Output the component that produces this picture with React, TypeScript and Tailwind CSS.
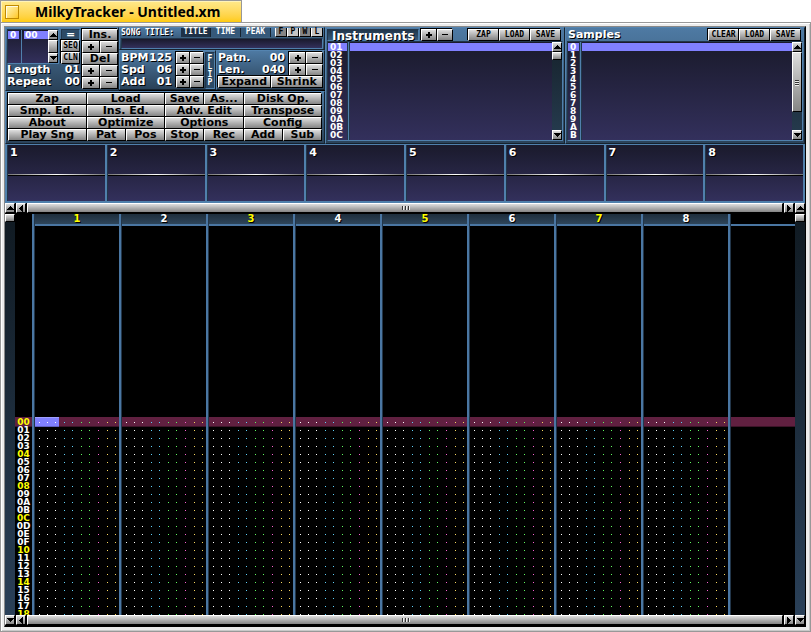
import { ReactNode } from 'react';
import clsx from 'clsx';

const HEX = '0123456789ABCDEF';
const hex2 = (n: number) => HEX[n >> 4] + HEX[n & 15];

const menuButtons = [
  { label: 'Zap', wide: true },
  { label: 'Load', wide: true },
  { label: 'Save' },
  { label: 'As...' },
  { label: 'Disk Op.', wide: true },
  { label: 'Smp. Ed.', wide: true },
  { label: 'Ins. Ed.', wide: true },
  { label: 'Adv. Edit', wide: true },
  { label: 'Transpose', wide: true },
  { label: 'About', wide: true },
  { label: 'Optimize', wide: true },
  { label: 'Options', wide: true },
  { label: 'Config', wide: true },
  { label: 'Play Sng', wide: true },
  { label: 'Pat' },
  { label: 'Pos' },
  { label: 'Stop' },
  { label: 'Rec' },
  { label: 'Add' },
  { label: 'Sub' },
];

// note, instrument, volume, effect, operand
const noteFields = [
  { chars: 3, color: 'bg-white' },
  { chars: 2, color: 'bg-[#60d0f8]' },
  { chars: 2, color: 'bg-[#60f860]' },
  { chars: 1, color: 'bg-[#f860d0]' },
  { chars: 2, color: 'bg-[#f8d860]' },
];

const channels = [1, 2, 3, 4, 5, 6, 7, 8];
const rows = Array.from({ length: 25 }, (_, i) => i);

const panel =
  'bg-linear-to-b from-[#4e7aa3] to-[#2a4259] border border-t-[#5484b0] border-l-[#5484b0] border-r-[#16222e] border-b-[#16222e]';
const well = 'bg-linear-to-b from-[#1a1a2c] to-[#33305c]';
const sunken = 'border border-t-[#22364a] border-l-[#22364a] border-r-[#5080ac] border-b-[#5080ac]';
const raised =
  'bg-linear-to-b from-[#dedede] to-[#858585] border border-t-white border-l-white border-r-black border-b-black';
const tiny = "font-['DejaVu_Sans_Mono',monospace] text-[8px] leading-[8px]";
const shadow = '[text-shadow:1px_1px_0_#000]';
const cursorRow = 'bg-[#602040] shadow-[0_-1px_0_#602040,0_1px_0_#3c1428]';

function Btn({ children, small, className, label }: { children: ReactNode; small?: boolean; className?: string; label?: string }) {
  return (
    <button
      type="button"
      aria-label={label}
      className={clsx(
        'flex h-3 min-w-0 items-center justify-center overflow-hidden whitespace-nowrap font-bold text-black shadow-[-1px_-1px_0_#000]',
        raised,
        small ? tiny : 'text-[11px] leading-[10px]',
        className
      )}
    >
      {children}
    </button>
  );
}

function Sign({ plus }: { plus?: boolean }) {
  return (
    <svg width="6" height="6" viewBox="0 0 6 6" shapeRendering="crispEdges">
      <path d={plus ? 'M0 2h6v2H0zM2 0h2v6H2z' : 'M0 2h6v1H0z'} fill="#000" />
    </svg>
  );
}

function Spin({ className }: { className: string }) {
  return (
    <div className={clsx('grid grid-cols-2', className)}>
      <Btn label="increase"><Sign plus /></Btn>
      <Btn label="decrease"><Sign /></Btn>
    </div>
  );
}

const arrows = {
  up: 'M3 0h1v1h1v1h1v1h1v1H0V3h1V2h1V1h1z',
  down: 'M0 0h7v1H6v1H5v1H4v1H3V3H2V2H1V1H0z',
  left: 'M4 0v7H3V6H2V5H1V4H0V3h1V2h1V1h1V0z',
  right: 'M0 0v7h1V6h1V5h1V4h1V3H3V2H2V1H1V0z',
};

function Arrow({ dir, className }: { dir: keyof typeof arrows; className?: string }) {
  const flat = dir === 'up' || dir === 'down';
  return (
    <button
      type="button"
      aria-label={dir}
      className={clsx('flex h-2.5 w-2.5 shrink-0 items-center justify-center', raised, className)}
    >
      <svg className="shrink-0" width={flat ? 7 : 4} height={flat ? 4 : 7} shapeRendering="crispEdges">
        <path d={arrows[dir]} fill="#000" />
      </svg>
    </button>
  );
}

function ScrollV({ thumb, grip }: { thumb: string; grip?: boolean }) {
  return (
    <div className="flex w-2.5 shrink-0 flex-col bg-linear-to-b from-[#16222c] to-[#263c50]">
      <Arrow dir="up" />
      <div className={clsx('flex flex-col items-center justify-center gap-px', thumb, raised)}>
        {grip && [0, 1, 2].map((i) => <span key={i} className="h-px w-1 bg-[#333] shadow-[0_1px_#eee]" />)}
      </div>
      <div className="flex-1" />
      <Arrow dir="down" />
    </div>
  );
}

function ScrollH({ v }: { v: 'up' | 'down' }) {
  return (
    <div className="flex h-[11px] shrink-0 gap-px bg-black">
      <Arrow dir={v} />
      <Arrow dir="left" />
      <div className={clsx('flex h-2.5 flex-1 items-center justify-center gap-0.5', raised)}>
        {[0, 1, 2].map((i) => <span key={i} className="h-1 w-px bg-[#333] shadow-[1px_0_#eee]" />)}
      </div>
      <Arrow dir="right" />
      <Arrow dir={v} />
    </div>
  );
}

function Field({ label, value }: { label: string; value: string }) {
  return (
    <div className={clsx('flex h-3 flex-1 items-center justify-between text-[11px] leading-3 font-bold text-white', shadow)}>
      <span>{label}</span>
      <span>{value}</span>
    </div>
  );
}

function List({ items, labelWidth, thumb, grip }: { items: string[]; labelWidth: string; thumb: string; grip?: boolean }) {
  return (
    <div className={clsx('flex h-25', sunken)}>
      <div className={clsx('flex flex-1 pt-px', well)}>
        <ul className={clsx('shrink-0 text-[9px] leading-2 font-bold text-white', labelWidth)}>
          {items.map((it, i) => (
            <li key={it} className={clsx('h-2 pl-0.5', i === 0 && 'bg-[#8080ff]')}>{it}</li>
          ))}
        </ul>
        <div className="-mt-px w-[3px] border-x border-l-[#22364a] border-r-[#22364a] bg-[#5080ac]" />
        <div className="h-2 flex-1 bg-[#8080ff]" />
      </div>
      <ScrollV thumb={thumb} grip={grip} />
    </div>
  );
}

function OrderPanel() {
  return (
    <div className={clsx('flex w-[114px] shrink-0 gap-0.5 p-px pr-0', panel)}>
      <div className="flex-1">
        <div className="flex gap-0.5">
          <div className={clsx('flex h-[35px] w-[52px]', sunken)}>
            <div className={clsx('flex flex-1 gap-0.5 pt-px text-[9px] leading-2 font-bold text-white', well)}>
              <span className="h-2 w-[11px] bg-[#8080ff] pl-0.5">0</span>
              <div className="-mt-px w-px bg-[#5080ac]" />
              <span className="h-2 flex-1 bg-[#8080ff] pl-px">00</span>
            </div>
            <ScrollV thumb="h-[15px]" />
          </div>
          <div className="flex flex-1 flex-col">
            <div className={clsx('flex h-[11px] items-center justify-center bg-[#2c4a66] text-[11px] leading-2 font-bold text-white', sunken)}>=</div>
            <Btn small>SEQ</Btn>
            <Btn small>CLN</Btn>
          </div>
        </div>
        <Field label="Length" value="01" />
        <Field label="Repeat" value="00" />
      </div>
      <div className="w-9">
        <Btn className="w-full">Ins.</Btn>
        <Spin className="w-full" />
        <Btn className="w-full">Del</Btn>
        <Spin className="w-full" />
        <Spin className="w-full" />
      </div>
    </div>
  );
}

function TitlePanel() {
  return (
    <div className={clsx('h-[23px] px-px', panel)}>
      <div className={clsx('flex h-[9px] items-center font-bold text-white', tiny)}>
        <label htmlFor="song" className={clsx('flex-1', shadow)}>SONG TITLE:</label>
        {['TITLE', 'TIME', 'PEAK'].map((t, i) => (
          <button
            key={t}
            type="button"
            className={clsx('h-[9px] w-[30px] border-r border-[#16222e] pb-px', i === 0 ? 'bg-[#1e3146]' : 'bg-[#36597a]')}
          >
            {t}
          </button>
        ))}
        <div className="ml-1 flex w-12">
          {['F', 'P', 'W', 'L'].map((t, i) => (
            <button
              key={t}
              type="button"
              className={clsx('h-[9px] flex-1 border border-t-0 border-r-black border-b-black border-l-white text-black', i % 2 ? 'bg-[#c4c4c4]' : 'bg-[#858585]')}
            >
              {t}
            </button>
          ))}
        </div>
      </div>
      <input id="song" className={clsx('mt-px block h-[11px] w-full px-1 text-[10px] text-white outline-none', well, sunken)} />
    </div>
  );
}

function MainPanel() {
  return (
    <div className="flex w-80 shrink-0 flex-col">
      <div className="flex">
        <OrderPanel />
        <div className="flex flex-1 flex-col">
          <TitlePanel />
          <div className="flex h-10">
            <div className={clsx('flex w-[97px] justify-between pt-px pl-px', panel)}>
              <div className="w-[83px]">
                {[['BPM', '125'], ['Spd', '06'], ['Add', '01']].map(([l, v]) => (
                  <div key={l} className="flex gap-1">
                    <Field label={l} value={v} />
                    <Spin className="w-7" />
                  </div>
                ))}
              </div>
              <button
                type="button"
                aria-label="FLIP"
                className={clsx('flex w-2.5 flex-col items-center justify-center bg-[#2c4a66] font-bold text-white', tiny, sunken)}
              >
                {['F', 'L', 'I', 'P'].map((c) => <span key={c}>{c}</span>)}
              </button>
            </div>
            <div className={clsx('flex-1 p-px pb-0', panel)}>
              {[['Patn.', '00'], ['Len.', '040']].map(([l, v]) => (
                <div key={l} className="flex gap-1">
                  <Field label={l} value={v} />
                  <Spin className="w-[34px]" />
                </div>
              ))}
              <div className="grid grid-cols-2">
                <Btn>Expand</Btn>
                <Btn>Shrink</Btn>
              </div>
            </div>
          </div>
        </div>
      </div>
      <div className={clsx('flex-1 px-0.5 pt-px', panel)}>
        <div className="grid grid-cols-8">
          {menuButtons.map((b) => (
            <Btn key={b.label} className={b.wide ? 'col-span-2' : undefined}>{b.label}</Btn>
          ))}
        </div>
      </div>
    </div>
  );
}

function InstrumentPanel() {
  return (
    <div className={clsx('flex-1 px-px', panel)}>
      <div className="flex h-[13px] items-center">
        <div className={clsx('h-3 w-[92px] bg-linear-to-b from-[#22364a] to-[#36597a] pl-1 text-[12px] leading-3 font-bold text-white', shadow, sunken)}>
          Instruments
        </div>
        <Spin className="ml-0.5 w-8" />
        <div className="mr-0.5 ml-auto grid w-[93px] grid-cols-3">
          <Btn small>ZAP</Btn>
          <Btn small>LOAD</Btn>
          <Btn small>SAVE</Btn>
        </div>
      </div>
      <List
        items={rows.slice(1, 13).map(hex2)}
        labelWidth="w-[19px]"
        thumb="h-2"
      />
    </div>
  );
}

function SamplePanel() {
  return (
    <div className={clsx('flex-1 px-px', panel)}>
      <div className="flex h-[13px] items-center">
        <div className={clsx('pl-px text-[11px] leading-3 font-bold text-white', shadow)}>Samples</div>
        <div className="mr-0.5 ml-auto grid w-[93px] grid-cols-3">
          <Btn small>CLEAR</Btn>
          <Btn small>LOAD</Btn>
          <Btn small>SAVE</Btn>
        </div>
      </div>
      <List items={HEX.slice(0, 12).split('')} labelWidth="w-[11px]" thumb="h-[60px]" grip />
    </div>
  );
}

function Scopes() {
  return (
    <div className={clsx('flex h-[59px] shrink-0 border-t border-b-2 border-l-2 border-[#5080ac]', well)}>
      {channels.map((c) => (
        <div key={c} className="flex flex-1 flex-col border-r-2 border-l border-r-[#5080ac] border-l-[#22364a]">
          <span className={clsx('h-[29px] pt-0.5 pl-0.5 text-[11px] leading-3 font-bold text-white', shadow)}>{c}</span>
          <div className="h-px bg-linear-to-r from-[#777] via-white to-[#777]" />
          <div className="h-px bg-black" />
        </div>
      ))}
    </div>
  );
}

function Channel({ n }: { n: number }) {
  return (
    <div className="flex w-[87px] shrink-0">
      <div className="w-[3px] shrink-0 border-r border-[#22364a] bg-[#4a76a2]" />
      <div className="flex-1">
        <div
          className={clsx(
            'h-3 border-b-2 border-[#4a76a2] bg-linear-to-b from-[#1e2e3c] to-[#2e455a] text-center text-[10px] leading-[10px] font-bold',
            n % 2 ? 'text-[#ffff00]' : 'text-white',
            shadow
          )}
        >
          {n}
        </div>
        <div className="h-48" />
        <div>
          {rows.map((r) => (
            <div key={r} className={clsx('flex h-2 gap-px', r === 0 && cursorRow)}>
              {noteFields.map((f, fi) => (
                <div
                  key={fi}
                  className={clsx('flex', r === 0 && n === 1 && fi === 0 && 'bg-[#8080ff] shadow-[0_-1px_0_#a0a0ff,0_1px_0_#6060c0]')}
                >
                  {Array.from({ length: f.chars }, (_, i) => (
                    <span key={i} className={clsx('size-2 bg-clip-content pt-1 pr-[3px] pb-[3px] pl-1', f.color)} />
                  ))}
                </div>
              ))}
            </div>
          ))}
        </div>
      </div>
    </div>
  );
}

function PatternEditor() {
  return (
    <div className="flex min-h-0 flex-1 overflow-hidden bg-black">
      <div className="w-2.5 shrink-0 bg-linear-to-b from-[#101a22] to-[#2a4058]">
        <div className={clsx('h-2', raised)} />
      </div>
      <div className="w-[17px] shrink-0 pt-[204px] text-[9px] leading-2 font-bold">
        {rows.map((r) => (
          <div key={r} className={clsx('h-2 text-center', r % 4 ? 'text-white' : 'text-[#ffff00]', r === 0 && cursorRow)}>
            {hex2(r)}
          </div>
        ))}
      </div>
      {channels.map((n) => <Channel key={n} n={n} />)}
      <div className="w-[3px] shrink-0 border-r border-[#22364a] bg-[#4a76a2]" />
      <div className="flex-1">
        <div className="h-3 border-b-2 border-[#4a76a2]" />
        <div className="h-48" />
        <div className={clsx('h-2', cursorRow)} />
      </div>
      <div className="w-2.5 shrink-0 bg-linear-to-b from-[#101a22] to-[#2a4058]">
        <div className={clsx('h-2', raised)} />
      </div>
    </div>
  );
}

export default function App() {
  return (
    <div className="flex h-screen flex-col bg-white font-['DejaVu_Sans',sans-serif]">
      <div className="flex h-[22px] w-[242px] shrink-0 items-center gap-4 border border-b-0 border-[#989898] bg-linear-to-b from-[#ffe98a] to-[#ffcb05] pl-1 shadow-[inset_1px_1px_0_#fff3b8]">
        <button
          type="button"
          aria-label="close"
          className="size-3.5 border border-[#c08a00] bg-linear-to-br from-[#fff6b0] to-[#ffc800] shadow-[inset_1px_1px_0_#fffbe0]"
        />
        <h1 className="font-['Noto_Sans',sans-serif] text-[14px] leading-5 font-bold whitespace-nowrap text-black">MilkyTracker - Untitled.xm</h1>
      </div>
      <div className="flex min-h-0 flex-1 border border-[#989898] bg-[#ececec] p-[3px] pr-1 pb-1 shadow-[inset_1px_1px_0_#fff,inset_-1px_-1px_0_#c8c8c8]">
        <div className="flex min-w-0 flex-1 flex-col border border-t-[#888] border-r-black border-b-black border-l-[#888] bg-black">
          <div className="flex h-[117px] shrink-0">
            <MainPanel />
            <InstrumentPanel />
            <SamplePanel />
          </div>
          <Scopes />
          <ScrollH v="up" />
          <PatternEditor />
          <ScrollH v="down" />
        </div>
      </div>
    </div>
  );
}
